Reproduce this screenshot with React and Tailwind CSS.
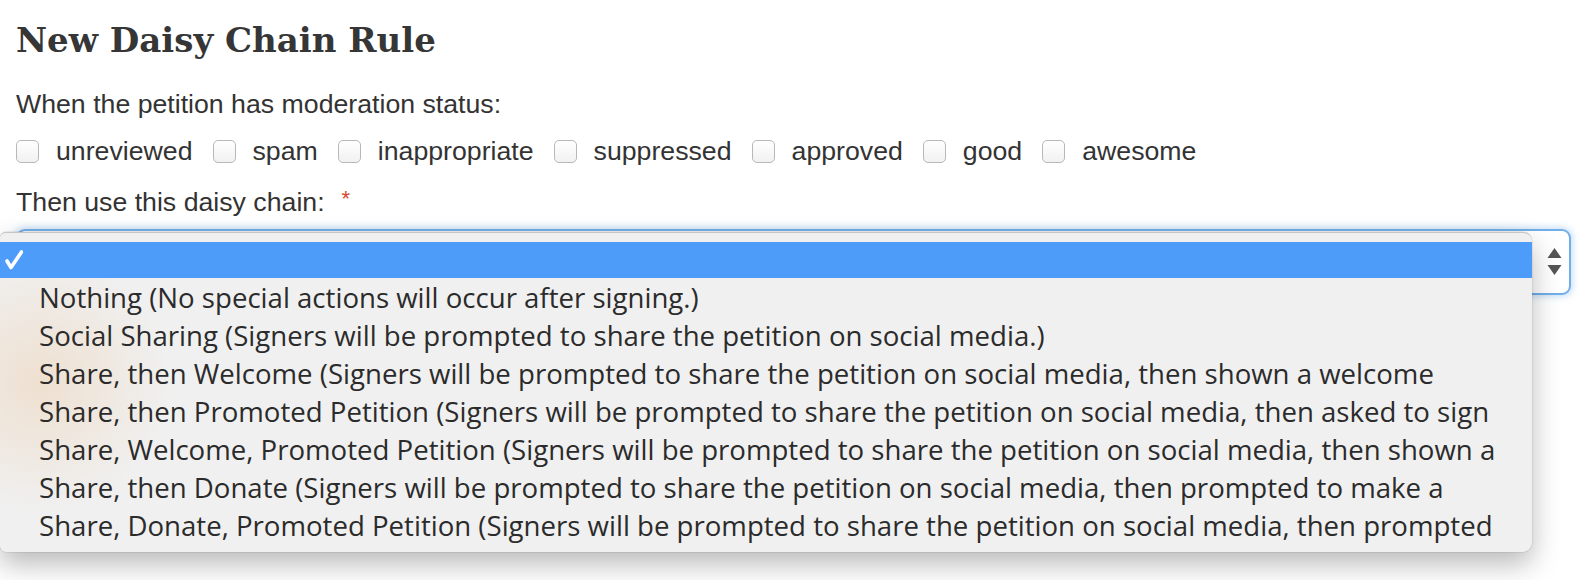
import React from "react";

const statuses = [
  "unreviewed",
  "spam",
  "inappropriate",
  "suppressed",
  "approved",
  "good",
  "awesome",
];

const options = [
  "Nothing (No special actions will occur after signing.)",
  "Social Sharing (Signers will be prompted to share the petition on social media.)",
  "Share, then Welcome (Signers will be prompted to share the petition on social media, then shown a welcome",
  "Share, then Promoted Petition (Signers will be prompted to share the petition on social media, then asked to sign",
  "Share, Welcome, Promoted Petition (Signers will be prompted to share the petition on social media, then shown a",
  "Share, then Donate (Signers will be prompted to share the petition on social media, then prompted to make a",
  "Share, Donate, Promoted Petition (Signers will be prompted to share the petition on social media, then prompted",
];

function Checkbox() {
  return (
    <span className="inline-block w-[23px] h-[23px] rounded-[5px] border border-[#b8b8b8] bg-gradient-to-b from-white to-[#f1f1f1] shadow-[inset_0_1px_0_rgba(255,255,255,0.8)]" />
  );
}

export default function App() {
  return (
    <div className="relative w-[1586px] h-[580px] bg-white overflow-hidden pl-4 text-[#333]">
      <h1
        className="mt-4 h-[48px] leading-[48px] text-[34px] font-bold text-[#363636]"
        style={{ fontFamily: '"DejaVu Serif", "Liberation Serif", serif' }}
      >
        New Daisy Chain Rule
      </h1>

      <div
        className="mt-[25px] h-[30px] leading-[30px] text-[26.7px]"
        style={{ fontFamily: '"Liberation Sans", Arial, sans-serif' }}
      >
        When the petition has moderation status:
      </div>

      <div
        className="mt-[17px] h-[30px] flex items-center text-[26.7px]"
        style={{ fontFamily: '"Liberation Sans", Arial, sans-serif' }}
      >
        {statuses.map((s) => (
          <label key={s} className="flex items-center mr-[20px]">
            <Checkbox />
            <span className="ml-[17px] leading-[30px]">{s}</span>
          </label>
        ))}
      </div>

      <div
        className="mt-[21px] h-[30px] leading-[30px] text-[26.7px] flex items-center"
        style={{ fontFamily: '"Liberation Sans", Arial, sans-serif' }}
      >
        <span>Then use this daisy chain:</span>
        <span className="ml-[17px] text-[#d9452a] text-[22px] -mt-[6px]">*</span>
      </div>

      <div className="mt-[12px] w-[1555px] h-[66px] rounded-[9px] border-2 border-[#72aee8] bg-white shadow-[0_0_6px_2px_rgba(110,170,235,0.35)] flex items-center justify-end pr-[7px]">
        <svg width="15" height="28" viewBox="0 0 15 28">
          <polygon points="7.5,0 14.5,10 0.5,10" fill="#555" />
          <polygon points="0.5,17 14.5,17 7.5,27" fill="#555" />
        </svg>
      </div>

      {/* open popup menu */}
      <div
        className="absolute left-0 top-[232px] w-[1532px] h-[320px] rounded-r-[9px] rounded-l-[6px] bg-[#f0f0f0] border-t border-[#c6c6c6] shadow-[0_12px_28px_rgba(0,0,0,0.28),0_0_0_0.5px_rgba(0,0,0,0.12)] overflow-hidden pt-[9px]"
        style={{ fontFamily: '"Open Sans", "Noto Sans", sans-serif' }}
      >
        <div className="absolute left-[-90px] top-[20px] w-[260px] h-[260px] bg-[radial-gradient(closest-side,rgba(236,200,160,0.4),rgba(240,240,240,0))]" />
        <div className="relative h-[36px] bg-[#4e9cf9] flex items-center pl-[5px]">
          <svg width="18" height="20" viewBox="0 0 18 20">
            <path
              d="M2 11 L6 17.5 L16.5 2"
              fill="none"
              stroke="#fff"
              strokeWidth="3.6"
              strokeLinecap="round"
              strokeLinejoin="round"
            />
          </svg>
        </div>
        {options.map((o) => (
          <div
            key={o}
            className="relative h-[38px] leading-[38px] pl-[39px] text-[27.6px] whitespace-nowrap text-[#2b2b2b]"
          >
            {o}
          </div>
        ))}
      </div>
    </div>
  );
}
